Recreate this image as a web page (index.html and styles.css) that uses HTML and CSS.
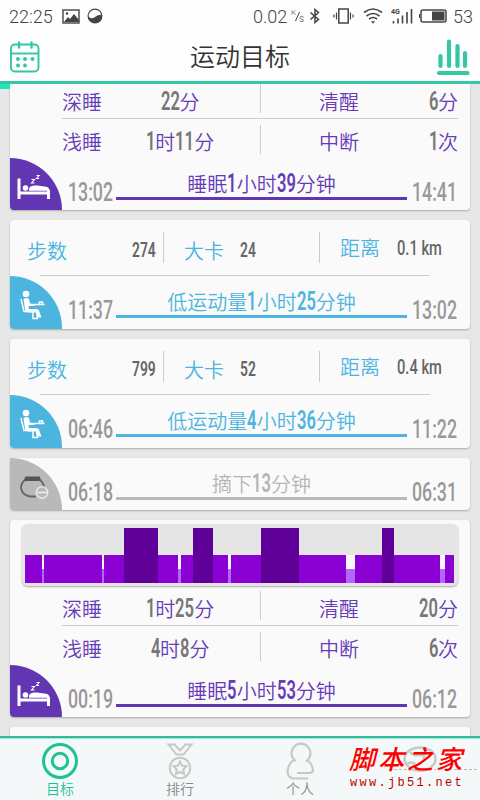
FILE: index.html
```
<!DOCTYPE html>
<html lang="zh-CN">
<head>
    <meta charset="UTF-8">
    <title>运动目标</title>
    <link rel="stylesheet" href="styles.css">
</head>
<body>
    <!-- shared icons -->
    <svg width="0" height="0" class="defs">
        <symbol id="bed" viewBox="0 0 34 28">
            <path d="M2 5.500v20.500M1 20h32M31.500 17v9" fill="none" stroke="#fff" stroke-width="3"/>
            <path d="M12 17.800v-2q1-4 8-3.300l9 1.200q3.500 .5 3.500 4.100z" fill="#fff"/>
            <circle cx="8.500" cy="15" r="2.800" fill="#fff"/>
            <path d="M14.500 6.500h3l-3 3.500h3M19.500 2.500h2.600l-2.600 3h2.600" fill="none" stroke="#fff" stroke-width="1.100"/>
        </symbol>
        <symbol id="desk" viewBox="0 0 28 30">
            <circle cx="8" cy="4" r="3.300" fill="#fff"/>
            <path d="M5.500 9q3-2 5.500 0l1 4.500 4.500 .5v2h-6l.5 3h7q3 0 3.500 3l2 5.500h-4l-1.500-5h-7.500q-3 0-3.500-3z" fill="#fff"/>
            <path d="M3 9l3 12.500h9v7h4.500l-1-7M16 14.500h10.500M21.500 12h3v2.500h-3z" fill="none" stroke="#fff" stroke-width="1.500"/>
        </symbol>
        <symbol id="band" viewBox="0 0 30 24">
            <path d="M6.500 1.500h14l2 4.500H4.500z" fill="#555"/>
            <path d="M6 5q-4 3-4 8 1 7 9 8.500h6M21 5q4 3 4 8" fill="none" stroke="#666" stroke-width="1.800"/>
            <circle cx="23" cy="17.500" r="5.800" fill="#b9b9b9" stroke="#e8e8e8" stroke-width="1.400"/>
            <path d="M18 17.500h10" stroke="#eee" stroke-width="1.600"/>
        </symbol>
    </svg>

    <header class="header">
        <div class="status">
            <span class="clock">22:25</span>
            <svg class="photo" width="18" height="15" viewBox="0 0 18 15">
                <rect x="1" y="1" width="16" height="13" fill="none" stroke="#444" stroke-width="1.400"/>
                <path d="M2 13l4-5 2 2 4-5 5 6v2z" fill="#444"/>
                <circle cx="5" cy="4.500" r="1.200" fill="#444"/>
            </svg>
            <svg width="16" height="16" viewBox="0 0 16 16">
                <circle cx="8" cy="8" r="6.900" fill="none" stroke="#444" stroke-width="1.200"/>
                <path d="M1 8q3 4 7 1t7-2q0 8-7 8-6.500-1-7-7z" fill="#444"/>
            </svg>
            <span class="speed">0.02</span>
            <svg class="unit" width="13" height="14" viewBox="0 0 13 14">
                <text x="0" y="6" font-size="8">K</text>
                <text x="8" y="13" font-size="10">s</text>
                <path d="M8.500 3L4.500 12" stroke="#444"/>
            </svg>
            <svg class="bt" width="12" height="16" viewBox="0 0 12 16">
                <path d="M1.500 4.500l8 7L6 14.500v-13l3.500 3-8 7" fill="none" stroke="#444" stroke-width="1.500"/>
            </svg>
            <svg class="vib" width="21" height="16" viewBox="0 0 21 16">
                <rect x="5.800" y="1" width="9.400" height="14" fill="none" stroke="#444" stroke-width="1.500"/>
                <path d="M3.500 4.500v7M17.500 4.500v7M1 6.500v3M20 6.500v3" stroke="#444" stroke-width="1.200"/>
            </svg>
            <svg class="wifi" width="20" height="16" viewBox="0 0 20 16">
                <path d="M1 4.500q9-7 18 0M3.500 8q6.500-5 13 0M6 11q4-3 8 0" fill="none" stroke="#444" stroke-width="1.600"/>
                <path d="M8 13.200h4l-2 2.500z" fill="#444"/>
            </svg>
            <svg class="signal" width="22" height="16" viewBox="0 0 22 16">
                <text x="0" y="6" font-size="7" font-weight="bold">4G</text>
                <path d="M2.500 13v2.500M7 10.500v5M11.500 7.500v8M16 4v11.500M20.500 1v14.500" stroke="#444" stroke-width="1.600"/>
            </svg>
            <svg class="battery" width="28" height="14" viewBox="0 0 28 14">
                <rect x="2" y="1" width="25" height="12" rx="2" fill="none" stroke="#444" stroke-width="1.500"/>
                <rect x="13" y="2.500" width="12.500" height="9" fill="#444"/>
                <path d="M.5 5v4" stroke="#444"/>
            </svg>
            <span class="percent">53</span>
        </div>
        <div class="title">
            <svg width="32" height="32" viewBox="0 0 32 32" fill="none" stroke="#35c6a3" stroke-width="1.900">
                <rect x="2" y="3.500" width="27.500" height="27" rx="4"/>
                <path d="M2 12.500h28"/>
                <path d="M10 1.500v5M22.500 1.500v5" stroke-width="2.400" stroke-linecap="round"/>
                <g fill="#35c6a3" stroke="none">
                    <circle cx="9" cy="18" r="2"/><circle cx="16" cy="18" r="2"/><circle cx="23.500" cy="18" r="2"/>
                    <circle cx="9" cy="24.500" r="2"/><circle cx="16" cy="24.500" r="2"/>
                </g>
            </svg>
            <h1>运动目标</h1>
            <svg width="34" height="38" viewBox="0 0 34 38" stroke="#35c6a3" stroke-width="4.200" stroke-linecap="round">
                <path d="M4.500 18v10M13 3.500v24.500M21.500 8v20M29 15v13M3 35h28.500"/>
            </svg>
        </div>
    </header>

    <main class="list">
        <div class="pull"></div>
        <section class="card sleep first">
            <div class="row">
                <span class="label">深睡</span>
                <span class="value"><b class="num n2">22</b>分</span>
                <span class="label">清醒</span>
                <span class="value right"><b class="num n1">6</b>分</span>
            </div>
            <div class="row">
                <span class="label">浅睡</span>
                <span class="value"><b class="num n1">1</b>时<b class="num n2">11</b>分</span>
                <span class="label">中断</span>
                <span class="value right"><b class="num n1">1</b>次</span>
            </div>
            <div class="foot">
                <div class="corner"><svg width="34" height="28"><use href="#bed"/></svg></div>
                <span class="time"><b class="num">13:02</b></span>
                <div class="bar">睡眠<b class="num n1">1</b>小时<b class="num n2">39</b>分钟</div>
                <span class="time"><b class="num">14:41</b></span>
            </div>
        </section>

        <section class="card active">
            <div class="stats">
                <div class="stat"><span>步数</span><b class="num n3">274</b></div>
                <div class="stat"><span>大卡</span><b class="num n2">24</b></div>
                <div class="stat"><span>距离</span><b class="num km">0.1 km</b></div>
            </div>
            <div class="foot">
                <div class="corner"><svg width="28" height="30"><use href="#desk"/></svg></div>
                <span class="time"><b class="num">11:37</b></span>
                <div class="bar">低运动量<b class="num n1">1</b>小时<b class="num n2">25</b>分钟</div>
                <span class="time"><b class="num">13:02</b></span>
            </div>
        </section>

        <section class="card active">
            <div class="stats">
                <div class="stat"><span>步数</span><b class="num n3">799</b></div>
                <div class="stat"><span>大卡</span><b class="num n2">52</b></div>
                <div class="stat"><span>距离</span><b class="num km">0.4 km</b></div>
            </div>
            <div class="foot">
                <div class="corner"><svg width="28" height="30"><use href="#desk"/></svg></div>
                <span class="time"><b class="num">06:46</b></span>
                <div class="bar">低运动量<b class="num n1">4</b>小时<b class="num n2">36</b>分钟</div>
                <span class="time"><b class="num">11:22</b></span>
            </div>
        </section>

        <section class="card off">
            <div class="foot">
                <div class="corner"><svg width="30" height="24"><use href="#band"/></svg></div>
                <span class="time"><b class="num">06:18</b></span>
                <div class="bar">摘下<b class="num n2">13</b>分钟</div>
                <span class="time"><b class="num">06:31</b></span>
            </div>
        </section>

        <section class="card sleep">
            <div class="chart">
                <i class="mid" style="width:17px"></i>
                <i class="low" style="width:2px"></i>
                <i class="mid" style="width:57.5px"></i>
                <i class="low" style="width:2.5px"></i>
                <i class="mid" style="width:20px"></i>
                <i class="high" style="width:34px"></i>
                <i class="mid" style="width:19.5px"></i>
                <i class="low" style="width:3.5px"></i>
                <i class="mid" style="width:12px"></i>
                <i class="high" style="width:19.5px"></i>
                <i class="mid" style="width:15.5px"></i>
                <i class="low" style="width:2.5px"></i>
                <i class="mid" style="width:30.5px"></i>
                <i class="high" style="width:37.5px"></i>
                <i class="mid" style="width:47.5px"></i>
                <i class="low" style="width:8.5px"></i>
                <i class="mid" style="width:27px"></i>
                <i class="high" style="width:12px"></i>
                <i class="mid" style="width:46.5px"></i>
                <i class="low" style="width:4.5px"></i>
                <i class="mid" style="width:9.5px"></i>
            </div>
            <div class="row">
                <span class="label">深睡</span>
                <span class="value"><b class="num n1">1</b>时<b class="num n2">25</b>分</span>
                <span class="label">清醒</span>
                <span class="value right"><b class="num n2">20</b>分</span>
            </div>
            <div class="row">
                <span class="label">浅睡</span>
                <span class="value"><b class="num n1">4</b>时<b class="num n1">8</b>分</span>
                <span class="label">中断</span>
                <span class="value right"><b class="num n1">6</b>次</span>
            </div>
            <div class="foot">
                <div class="corner"><svg width="34" height="28"><use href="#bed"/></svg></div>
                <span class="time"><b class="num">00:19</b></span>
                <div class="bar">睡眠<b class="num n1">5</b>小时<b class="num n2">53</b>分钟</div>
                <span class="time"><b class="num">06:12</b></span>
            </div>
        </section>

        <section class="card next"></section>
    </main>

    <nav class="tabs">
        <div class="tab current">
            <svg width="38" height="38" viewBox="0 0 38 38" fill="none" stroke="#1cc495" stroke-width="3">
                <circle cx="19" cy="19" r="16.500"/><circle cx="19" cy="19" r="7.700"/>
            </svg>
            <span>目标</span>
        </div>
        <div class="tab">
            <svg width="38" height="38" viewBox="0 0 38 38" fill="none" stroke="#c8c8c8" stroke-width="2">
                <path d="M7.500 2.500h6l5.500 6 5.500-6h6l-8 10h-7z"/>
                <circle cx="19" cy="26" r="10.200"/>
                <path d="M19 19.500l2 4.200 4.600.6-3.400 3.200.9 4.600-4.100-2.300-4.100 2.300.9-4.600-3.400-3.200 4.600-.6z"/>
            </svg>
            <span>排行</span>
        </div>
        <div class="tab">
            <svg width="38" height="38" viewBox="0 0 38 38" fill="none" stroke="#c8c8c8" stroke-width="2.200" stroke-linecap="round">
                <path d="M14 18.500a9.500 9.500 0 1 1 12 0q5 2.500 6 9c0 3-2 3.500-4 3.500H17M13 18q-5.500 3-6.500 11c0 5 3 7.500 7 7.500h13"/>
            </svg>
            <span>个人</span>
        </div>
        <div class="tab">
            <svg width="38" height="38" viewBox="0 0 38 38" fill="none" stroke="#c8c8c8" stroke-width="2.500">
                <ellipse cx="19" cy="17" rx="15.500" ry="11.500"/>
                <path d="M9 10q3 4 7 3h7v6M6 22q6-4 9 2"/>
            </svg>
            <div class="mark">
                <strong>脚本之家</strong>
                <small>www.jb51.net</small>
            </div>
        </div>
    </nav>
</body>
</html>
```
FILE: styles.css
```
* {
    box-sizing: border-box;
}
body {
    margin: 0;
    width: 480px;
    height: 800px;
    overflow: hidden;
    display: flex;
    flex-direction: column;
    background: #e7e7e7;
    font-family: Roboto, "Noto Sans CJK SC", sans-serif;
    color: #444;
}
svg {
    display: block;
    flex: none;
}
.defs {
    position: absolute;
}

/* header */
.header {
    height: 84px;
    flex: none;
    background: #fefefe;
    border-bottom: 3px solid #35c6a3;
}
.status {
    display: flex;
    align-items: center;
    height: 32px;
    padding-left: 9px;
    font-size: 18px;
    font-weight: 350;
}
.status text {
    fill: #444;
}
.clock { width: 53px; }
.photo { margin-right: 7px; }
.speed { margin-left: 150px; width: 37px; }
.unit { margin-left: 1px; }
.bt { margin-left: 5px; }
.vib { margin-left: 12px; }
.wifi { margin-left: 9px; }
.signal { margin-left: 8px; }
.battery { margin-left: 6px; }
.percent { margin-left: 6px; }
.title {
    display: flex;
    align-items: center;
    justify-content: space-between;
    height: 49px;
    padding: 1px 10px 0 9px;
}
.title h1 {
    margin: 2px 0 0 3px;
    font-size: 25px;
    font-weight: 350;
    line-height: 30px;
    color: #333;
}

/* condensed digits */
.num {
    display: inline-block;
    font-size: 25px;
    line-height: 26px;
    font-weight: 600;
    color: #777;
    white-space: nowrap;
    transform: scaleX(.66);
    transform-origin: left;
}
.n1 { width: .38em; }
.n2 { width: .76em; }
.n3 { width: 1.12em; }

/* cards */
.list {
    flex: 1;
    min-height: 0;
    overflow: hidden;
    display: flex;
    flex-direction: column;
    gap: 10px;
    padding: 0 10px;
}
/* edge of the refresh strip */
.pull {
    flex: none;
    width: 10px;
    height: 5px;
    margin: 0 0 -15px -10px;
    background: #1de9b6;
}
.card {
    flex: none;
    background: #fafafa;
    border-radius: 4px;
    box-shadow: 0 1px 2px #aaa;
}
.first {
    border-radius: 0 0 4px 4px;
}
.sleep { color: #673ab7; --main: #6236b3; }
.active { color: #4bb4df; --main: #4bb4df; height: 109px; }
.off { color: #b5b5b5; --main: #b9b9b9; }
.next { height: 40px; }

.row {
    display: grid;
    grid-template-columns: 40px 156px 61px 40px 1fr;
    grid-template-rows: 34px;
    align-items: center;
    margin-left: 52px;
    width: 396px;
    font-size: 20px;
    font-weight: 350;
    line-height: 30px;
    white-space: nowrap;
    border-bottom: 1px solid #ccc;
}
.row span {
    padding-top: 3px;
}
.row::before {
    content: "";
    grid-column: 3;
    grid-row: 1;
    height: 29px;
    margin-left: 2px;
    margin-top: -6px;
    border-left: 1px solid #ccc;
}
.row + .row {
    grid-template-rows: 39px;
    padding-top: 3px;
    height: 39px;
    border: 0;
}
.row + .row::before {
    margin-top: -5px;
}
.value {
    text-align: center;
}
.right {
    text-align: right;
}

.stats {
    display: grid;
    grid-template-columns: 123px 156px 1fr;
    height: 56px;
    margin: 0 40px 0 30px;
    padding-top: 12px;
    border-bottom: 1px solid #ccc;
}
.stat {
    display: flex;
    align-items: center;
    height: 31px;
    padding-left: 20px;
    padding-top: 5px;
    border-left: 1px solid #ccc;
    font-size: 20px;
    font-weight: 350;
    white-space: nowrap;
}
.stat span {
    flex: none;
}
.stat:first-child {
    border: 0;
    padding-left: 0;
    margin-left: -13px;
    justify-content: space-between;
    padding-right: 7px;
}
.stat:nth-child(2) .num {
    margin-left: 16px;
}
.stat:last-child {
    padding-top: 0;
    margin-right: -30px;
}
.stat .num {
    font-size: 21px;
    color: #666;
}
.stat .km {
    margin-left: 17px;
    font-weight: 500;
    transform: scaleX(.7);
}

.foot {
    display: flex;
    height: 52px;
}
.active .foot {
    height: 53px;
}
.corner {
    width: 52px;
    height: 100%;
    display: flex;
    align-items: center;
    justify-content: center;
    padding: 5px 5px 0 0;
    background: var(--main);
    border-radius: 0 52px 0 4px;
}
.active .corner {
    padding-right: 8px;
}
.time {
    width: 48px;
    margin-left: 6px;
    padding-top: 22px;
}
.time .num {
    font-weight: 500;
    color: #999;
    transform: scaleX(.71);
}
.bar {
    width: 291px;
    height: 42px;
    padding-top: 13px;
    border-bottom: 3px solid var(--main);
    text-align: center;
    font-size: 20px;
    font-weight: 350;
    line-height: 28px;
    white-space: nowrap;
}
.bar + .time {
    margin-left: 5px;
}
.bar .num {
    color: inherit;
}

/* sleep chart */
.chart {
    display: flex;
    align-items: flex-end;
    width: 436px;
    height: 62px;
    margin: 0 12px 5px;
    padding: 0 3px 3px;
    background: #e5e5e5;
    border-radius: 6px;
    box-shadow: 0 1px 2px #aaa;
}
.sleep:not(.first) {
    padding-top: 4px;
}
.chart i {
    height: 28px;
    flex: none;
}
.mid { background: #8b00d2; }
.chart .high { height: 55px; background: #5f0099; }
.low { background: linear-gradient(#f8f8f8 50%, #b266ff 50%); }

/* bottom tabs */
.tabs {
    display: flex;
    flex: none;
    height: 64px;
    background: #f5f8f8;
    border-top: 2px solid #35b99b;
    box-shadow: inset 0 1px #9beedd;
}
.tab {
    width: 120px;
    display: flex;
    flex-direction: column;
    align-items: center;
    padding-top: 4px;
    font-size: 14px;
    font-weight: 350;
    line-height: 18px;
    color: #888;
    position: relative;
}
.current {
    color: #1cc495;
}
.mark {
    position: absolute;
    left: -11px;
    top: 7px;
    width: 116px;
    text-align: center;
    white-space: nowrap;
}
.mark::before {
    content: "";
    position: absolute;
    left: 40px;
    top: 24px;
    width: 88px;
    border-top: 1px dashed #bbb;
}
.mark strong {
    display: block;
    position: relative;
    font-size: 26px;
    line-height: 31px;
    letter-spacing: 3px;
    font-style: italic;
    font-weight: 500;
    color: #f00;
}
.mark small {
    display: block;
    font: 12px/14px "Liberation Mono", monospace;
    letter-spacing: 2.3px;
    color: #b00;
}
```
